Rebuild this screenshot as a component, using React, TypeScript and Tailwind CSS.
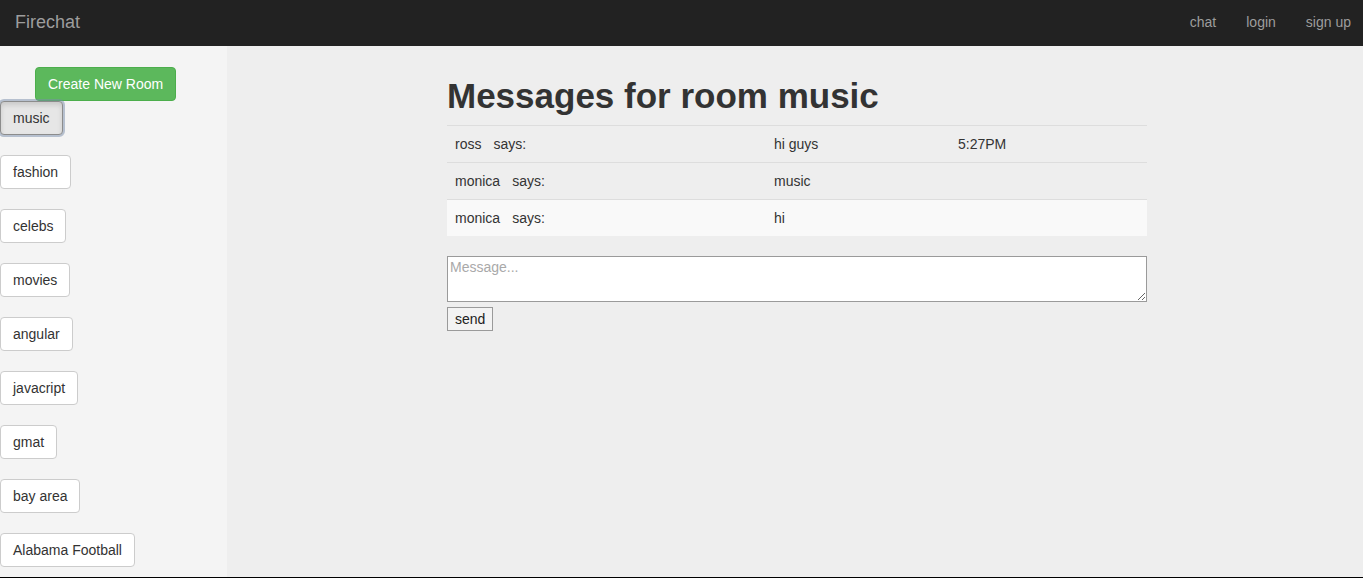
import React from "react";

const rooms = ["music", "fashion", "celebs", "movies", "angular", "javacript", "gmat", "bay area", "Alabama Football"];

const messages = [
  { user: "ross", text: "hi guys", time: "5:27PM" },
  { user: "monica", text: "music", time: "" },
  { user: "monica", text: "hi", time: "" },
];

export default function App() {
  return (
    <div
      className="h-[578px] w-[1363px] overflow-hidden border-b border-black bg-[#eeeeee] text-[14px] leading-[20px] text-[#333333] flex flex-col"
      style={{ fontFamily: '"Liberation Sans", Arial, sans-serif' }}
    >
      <nav className="h-[46px] shrink-0 bg-[#222222] flex items-center justify-between pl-[15px] pr-[12px] pb-[3px]">
        <span className="text-[18px] leading-[20px] text-[#9d9d9d] mt-[1px]">Firechat</span>
        <div className="flex gap-[30px] text-[#9d9d9d]">
          <span>chat</span>
          <span>login</span>
          <span>sign up</span>
        </div>
      </nav>
      <div className="flex flex-1 min-h-0">
        <aside className="w-[227px] shrink-0 bg-[#f4f4f4] pt-[21px] flex flex-col items-start">
          <button className="ml-[35px] h-[34px] px-[12px] rounded-[4px] border border-[#4cae4c] bg-[#5cb85c] text-white">
            Create New Room
          </button>
          <div className="flex flex-col items-start gap-[20px]">
            {rooms.map((r, i) => (
              <button
                key={r}
                className={
                  i === 0
                    ? "h-[34px] px-[12px] rounded-[4px] border border-[#8c8c8c] bg-[#e6e6e6] text-[#333] shadow-[inset_0_3px_5px_rgba(0,0,0,0.125),0_0_0_2px_rgba(120,140,170,0.5)]"
                    : "h-[34px] px-[12px] rounded-[4px] border border-[#cccccc] bg-white text-[#333]"
                }
              >
                {r}
              </button>
            ))}
          </div>
        </aside>
        <main className="flex-1 pl-[220px] pt-[31px]">
          <div className="w-[700px]">
            <h1 className="text-[35px] leading-[38px] font-bold text-[#333] mb-[10px]">Messages for room music</h1>
            <div className="flex flex-col">
              {messages.map((m, i) => (
                <div
                  key={i}
                  className={
                    "flex h-[37px] border-t border-[#dddddd] items-center " + (i === 2 ? "bg-[#f9f9f9]" : "")
                  }
                >
                  <div className="w-[319px] px-[8px]">
                    {m.user}
                    <span className="ml-[12px]">says:</span>
                  </div>
                  <div className="w-[184px] px-[8px]">{m.text}</div>
                  <div className="flex-1 px-[8px]">{m.time}</div>
                </div>
              ))}
            </div>
            <textarea
              placeholder="Message..."
              className="mt-[20px] block w-[700px] h-[46px] border border-[#9a9a9a] bg-white px-[2px] py-[1px] text-[14px] leading-[18px] placeholder:text-[#a9a9a9] resize-y"
            />
            <button className="mt-[5px] h-[24px] px-[7px] border border-[#9a9a9a] bg-[#f3f3f3] text-[#222] leading-[20px]">
              send
            </button>
          </div>
        </main>
      </div>
    </div>
  );
}
